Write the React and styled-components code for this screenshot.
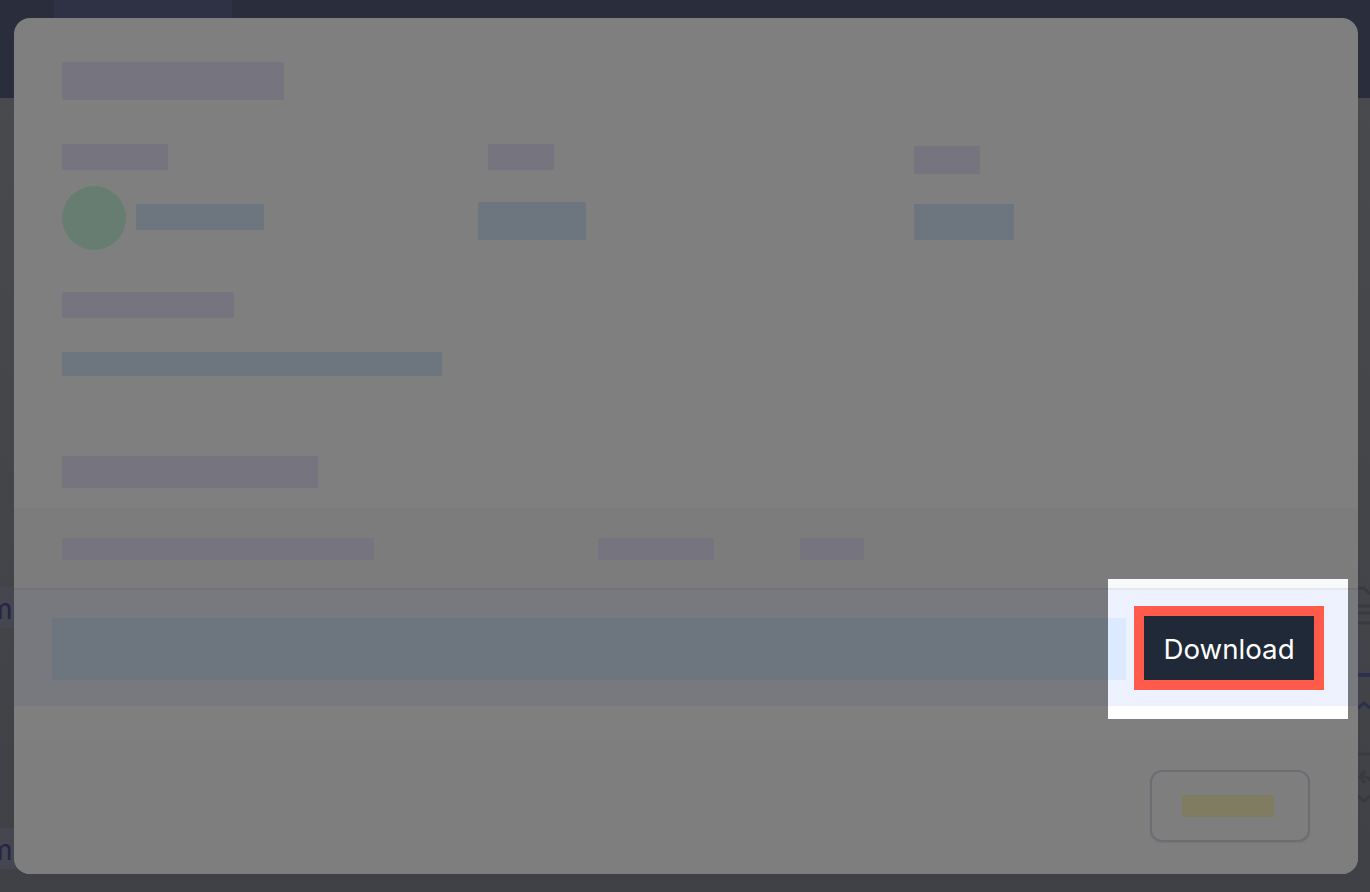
import React from 'react';
import styled, { createGlobalStyle } from 'styled-components';

const GlobalStyle = createGlobalStyle`
  html, body {
    margin: 0;
    padding: 0;
    width: 100%;
    height: 100%;
    overflow: hidden;
    background: #8e9096;
    font-family: Inter, 'Liberation Sans', sans-serif;
  }
`;

const tones = {
  purple: '#ede9fe',
  blue: '#dbeafe',
  yellow: '#fef9c3',
};

const Page = styled.div`
  width: 1370px;
  height: 892px;
  overflow: hidden;
  position: relative;
  display: flex;
  flex-direction: column;
  background: linear-gradient(180deg, #94969c 0%, #80828c 100%);
`;

const TopBar = styled.header`
  height: 98px;
  flex-shrink: 0;
  padding-left: 54px;
  background: #545a78;
`;

const ActiveTab = styled.div`
  width: 178px;
  height: 40px;
  border-radius: 0 0 12px 12px;
  background: #5e6288;
`;

const PageBody = styled.main`
  flex: 1;
  display: flex;
  justify-content: space-between;
`;

const LeftList = styled.div`
  display: flex;
  flex-direction: column;
  width: 60px;
`;

const ListRow = styled.div`
  height: 41px;
  margin-top: ${(p) => p.$top}px;
  margin-left: -12px;
  background: #8a8c9e;
  color: #4a4a8a;
  font-size: 28px;
  line-height: 44px;
`;

const RailIcons = styled.svg`
  width: 12px;
  height: 240px;
  margin-top: 482px;
`;

const Modal = styled.section`
  position: absolute;
  top: 18px;
  left: 14px;
  width: 1344px;
  height: 856px;
  border-radius: 16px;
  overflow: hidden;
  background: #fff;
  padding-top: 44px;
  box-sizing: border-box;
`;

const Skeleton = styled.div`
  width: ${(p) => p.$w}px;
  height: ${(p) => p.$h}px;
  margin-top: ${(p) => p.$top || 0}px;
  margin-left: ${(p) => p.$left || 0}px;
  flex-shrink: 0;
  border-radius: 1px;
  background: ${(p) => tones[p.$tone || 'purple']};
`;

const ModalBody = styled.div`
  padding: 0 48px;
`;

const InfoGrid = styled.div`
  display: grid;
  grid-template-columns: repeat(3, 396px);
  column-gap: 30px;
  margin-top: 44px;
`;

const Person = styled.div`
  display: flex;
  margin-top: 16px;
`;

const Avatar = styled.div`
  width: 64px;
  height: 64px;
  border-radius: 50%;
  background: #d1fae5;
`;

const TableHead = styled.div`
  height: 50px;
  margin-top: 20px;
  padding: 30px 48px 0;
  display: flex;
  background: #f9f9fb;
  border-bottom: 2px solid #e5e7eb;
`;

const FileRow = styled.div`
  height: 116px;
  padding-left: 38px;
  display: flex;
  align-items: center;
  background: #eef2ff;
`;

const DownloadButton = styled.button`
  width: 170px;
  height: 64px;
  margin-left: 18px;
  padding: 1px 0 0;
  border: 0;
  outline: 10px solid #ff5a4a;
  background: #1f2937;
  color: #fff;
  font-family: Inter, 'Liberation Sans', sans-serif;
  font-size: 27.7px;
  font-weight: 400;
`;

const Footer = styled.footer`
  margin-top: 32px;
  padding: 32px 48px;
  display: flex;
  justify-content: flex-end;
  background: #fdfdfd;
`;

const CloseButton = styled.div`
  width: 160px;
  height: 72px;
  box-sizing: border-box;
  border: 2px solid #d9dbe6;
  border-radius: 12px;
  display: flex;
  align-items: center;
  justify-content: center;
  box-shadow: 0 1px 2px rgba(0, 0, 0, 0.08);
`;

// the hole in the tour backdrop, everything around it gets dimmed by the shadow
const Spotlight = styled.div`
  position: absolute;
  top: 579px;
  left: 1108px;
  width: 240px;
  height: 140px;
  box-shadow: 0 0 0 2000px rgba(0, 0, 0, 0.5);
  pointer-events: none;
`;

function App() {
  return (
    <>
      <GlobalStyle />
      <Page>
        <TopBar>
          <ActiveTab />
        </TopBar>
        <PageBody>
          <LeftList>
            <ListRow $top={489}>m</ListRow>
            <ListRow $top={200}>m</ListRow>
          </LeftList>
          <RailIcons viewBox="0 0 12 240" fill="none">
            <path d="M0 8h6l6 6" stroke="#72747e" strokeWidth="3" />
            <path d="M0 26h12M0 33h12M0 43h12" stroke="#72747e" strokeWidth="3" />
            <path d="M0 95h12" stroke="#5c5e98" strokeWidth="4" />
            <path d="M0 128l6-5 6 5" stroke="#5c5e98" strokeWidth="3" />
            <path d="M0 174h12" stroke="#72747e" strokeWidth="3" />
            <path d="M7 191l-5 6 5 6M2 197h6a4 4 0 0 1 4 4" stroke="#72747e" strokeWidth="3" />
            <path d="M0 216l6 5 6-5" stroke="#72747e" strokeWidth="3" />
          </RailIcons>
        </PageBody>

        <Modal>
          <ModalBody>
            <Skeleton $w={222} $h={38} />
            <InfoGrid>
              <div>
                <Skeleton $w={106} $h={26} />
                <Person>
                  <Avatar />
                  <Skeleton $w={128} $h={26} $tone="blue" $left={10} $top={18} />
                </Person>
              </div>
              <div>
                <Skeleton $w={66} $h={26} />
                <Skeleton $w={108} $h={38} $tone="blue" $left={-10} $top={32} />
              </div>
              <div>
                <Skeleton $w={66} $h={28} $top={2} />
                <Skeleton $w={100} $h={36} $tone="blue" $top={30} />
              </div>
            </InfoGrid>
            <Skeleton $w={172} $h={26} $top={42} />
            <Skeleton $w={380} $h={24} $tone="blue" $top={34} />
            <Skeleton $w={256} $h={32} $top={80} />
          </ModalBody>

          <TableHead>
            <Skeleton $w={312} $h={22} />
            <Skeleton $w={116} $h={22} $left={224} />
            <Skeleton $w={64} $h={22} $left={86} />
          </TableHead>
          <FileRow>
            <Skeleton $w={1074} $h={62} $tone="blue" $top={2} />
            <DownloadButton>Download</DownloadButton>
          </FileRow>
          <Footer>
            <CloseButton>
              <Skeleton $w={92} $h={22} $tone="yellow" $left={-4} />
            </CloseButton>
          </Footer>
        </Modal>

        <Spotlight />
      </Page>
    </>
  );
}

export default App;
